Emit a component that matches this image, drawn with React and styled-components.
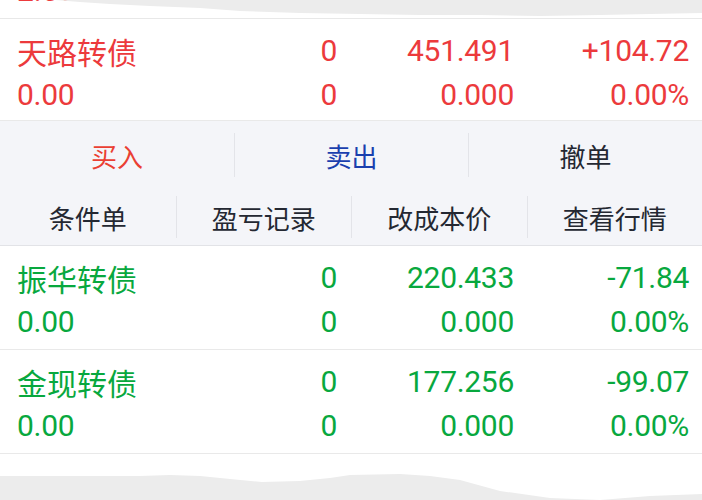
import React from "react";
import styled, { createGlobalStyle } from "styled-components";

const Global = createGlobalStyle`
  html, body { margin: 0; padding: 0; background: #ffffff; }
  body { font-family: "Noto Sans CJK SC", "Noto Sans", sans-serif; }
  #root { width: 702px; height: 500px; overflow: hidden; }
`;

const RED = "#ec3a3c";
const GREEN = "#08a83e";

const Page = styled.div`
  width: 702px;
  height: 500px;
  background: #ffffff;
  display: flex;
  flex-direction: column;
  overflow: hidden;
`;

const TopEdge = styled.div`
  position: relative;
  height: 18px;
  flex: none;
  overflow: hidden;
  border-bottom: 1px solid #e8e8e8;
`;

const Remnant = styled.div`
  position: absolute;
  left: 17px;
  bottom: 12px;
  font-family: Roboto, "Liberation Sans", sans-serif;
  font-size: 30px;
  line-height: 30px;
  color: ${RED};
`;

const TearSvg = styled.svg`
  position: absolute;
  left: 0;
  top: 0;
  display: block;
`;

const BottomEdge = styled.div`
  position: relative;
  flex: 1;
  overflow: hidden;
`;

const Row = styled.div`
  display: grid;
  grid-template-columns: 200px 120px 177px 175px;
  grid-auto-rows: 44px;
  padding: 10px 13px ${(p) => p.$pb}px 17px;
  border-bottom: 1px solid #e9e9e9;
  color: ${(p) => (p.$up ? RED : GREEN)};
  flex: none;
`;

const Cell = styled.div`
  font-family: ${(p) =>
    p.$cjk
      ? '"Noto Sans CJK SC", sans-serif'
      : 'Roboto, "Liberation Sans", sans-serif'};
  font-size: 30px;
  line-height: 44px;
  text-align: ${(p) => (p.$left ? "left" : "right")};
  white-space: nowrap;
  letter-spacing: ${(p) => (p.$cjk ? "0" : "-0.3px")};
`;

const Panel = styled.div`
  background: #f4f5f9;
  padding: 10px 0 4px;
  border-bottom: 1px solid #e2e3e7;
  flex: none;
  display: flex;
  flex-direction: column;
  gap: 14px;
`;

const ActionRow = styled.div`
  display: grid;
  grid-template-columns: repeat(${(p) => p.$n}, 1fr);
  height: 48px;
  align-items: center;
`;

const Action = styled.div`
  height: ${(p) => (p.$tall ? "44px" : "42px")};
  display: flex;
  align-items: center;
  justify-content: center;
  font-size: 26px;
  color: ${(p) => p.$color || "#242832"};
  border-left: ${(p) => (p.$first ? "none" : "1px solid #e3e4e9")};
  font-family: "Noto Sans CJK SC", sans-serif;
`;

const rows = [
  {
    up: true,
    top: ["天路转债", "0", "451.491", "+104.72"],
    bot: ["0.00", "0", "0.000", "0.00%"],
  },
];

const rowsAfter = [
  {
    up: false,
    top: ["振华转债", "0", "220.433", "-71.84"],
    bot: ["0.00", "0", "0.000", "0.00%"],
  },
  {
    up: false,
    top: ["金现转债", "0", "177.256", "-99.07"],
    bot: ["0.00", "0", "0.000", "0.00%"],
  },
];

function QuoteRow({ data, pb }) {
  return (
    <Row $up={data.up} $pb={pb}>
      <Cell $cjk $left>{data.top[0]}</Cell>
      <Cell>{data.top[1]}</Cell>
      <Cell>{data.top[2]}</Cell>
      <Cell>{data.top[3]}</Cell>
      <Cell $left>{data.bot[0]}</Cell>
      <Cell>{data.bot[1]}</Cell>
      <Cell>{data.bot[2]}</Cell>
      <Cell>{data.bot[3]}</Cell>
    </Row>
  );
}

export default function App() {
  return (
    <Page>
      <Global />
      <TopEdge>
        <Remnant>2.00</Remnant>
        <TearSvg width="702" height="18" viewBox="0 0 702 18">
          <path
            d="M55 0 L80 2 L110 4 L150 6 L200 8 L240 11 L300 13 L360 14 L420 15 L480 15 L540 16 L600 15 L650 14 L702 13 L702 0 Z"
            fill="#ececec"
          />
        </TearSvg>
      </TopEdge>
      {rows.map((r, i) => (
        <QuoteRow key={i} data={r} pb={3} />
      ))}
      <Panel>
        <ActionRow $n={3}>
          <Action $first $tall $color="#ea3f33">买入</Action>
          <Action $tall $color="#1a3fae">卖出</Action>
          <Action $tall>撤单</Action>
        </ActionRow>
        <ActionRow $n={4}>
          <Action $first>条件单</Action>
          <Action>盈亏记录</Action>
          <Action>改成本价</Action>
          <Action>查看行情</Action>
        </ActionRow>
      </Panel>
      {rowsAfter.map((r, i) => (
        <QuoteRow key={i} data={r} pb={5} />
      ))}
      <BottomEdge>
        <TearSvg width="702" height="60" viewBox="0 0 702 60">
          <path
            d="M0 22 L140 22 L170 21 L200 22 L230 25 L262 28 L300 27 L330 24 L350 21 L400 20 L430 22 L460 26 L500 37 L550 44 L600 46 L650 42 L702 40 L702 60 L0 60 Z"
            fill="#ececec"
          />
        </TearSvg>
      </BottomEdge>
    </Page>
  );
}
